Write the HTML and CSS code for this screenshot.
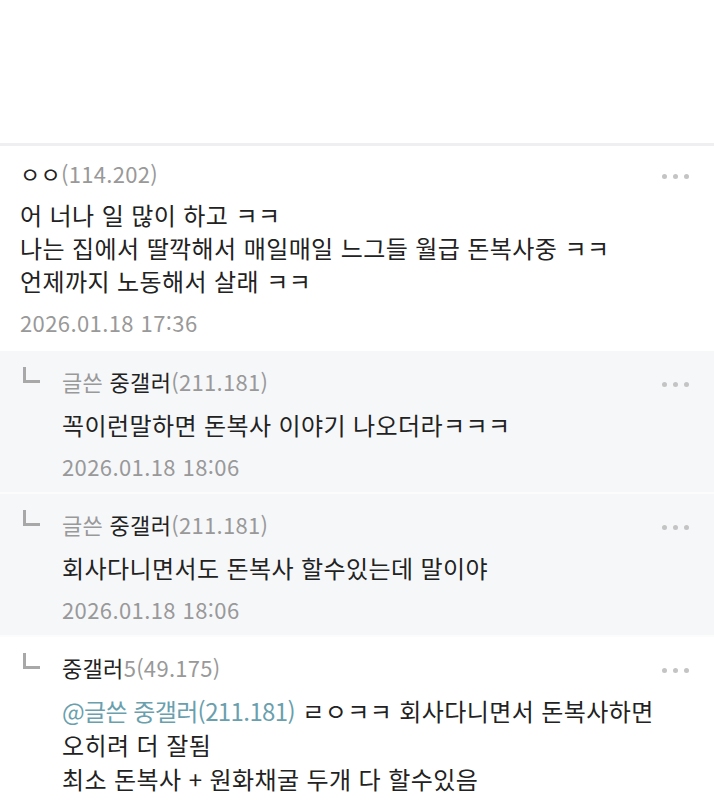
FILE: index.html
```html
<!DOCTYPE html>
<html lang="ko">
<head>
    <meta charset="UTF-8">
    <meta name="viewport" content="width=device-width, initial-scale=1.0">
    <title>댓글</title>
    <link rel="stylesheet" href="styles.css">
</head>
<body>

    <div class="top-space"></div>

    <div class="comments">
        <!-- 본 댓글 -->
        <div class="comment">
            <div class="comment-head">
                <span class="nick">ㅇㅇ<span class="ip">(114.202)</span></span>
                <span class="more"><i></i><i></i><i></i></span>
            </div>
            <div class="comment-body">
                어 너나 일 많이 하고 ㅋㅋ<br>
                나는 집에서 딸깍해서 매일매일 느그들 월급 돈복사중 ㅋㅋ<br>
                언제까지 노동해서 살래 ㅋㅋ
            </div>
            <div class="comment-date">2026.01.18 17:36</div>
        </div>

        <!-- 답글 -->
        <div class="reply">
            <span class="reply-mark"></span>
            <div class="reply-main">
                <div class="comment-head">
                    <span class="nick"><span class="writer">글쓴</span> 중갤러<span class="ip">(211.181)</span></span>
                    <span class="more"><i></i><i></i><i></i></span>
                </div>
                <div class="comment-body">꼭이런말하면 돈복사 이야기 나오더라ㅋㅋㅋ</div>
                <div class="comment-date">2026.01.18 18:06</div>
            </div>
        </div>

        <div class="reply">
            <span class="reply-mark"></span>
            <div class="reply-main">
                <div class="comment-head">
                    <span class="nick"><span class="writer">글쓴</span> 중갤러<span class="ip">(211.181)</span></span>
                    <span class="more"><i></i><i></i><i></i></span>
                </div>
                <div class="comment-body">회사다니면서도 돈복사 할수있는데 말이야</div>
                <div class="comment-date">2026.01.18 18:06</div>
            </div>
        </div>

        <div class="reply reply-last">
            <span class="reply-mark"></span>
            <div class="reply-main">
                <div class="comment-head">
                    <span class="nick">중갤러<span class="ip">5(49.175)</span></span>
                    <span class="more"><i></i><i></i><i></i></span>
                </div>
                <div class="comment-body tall">
                    <span class="mention">@글쓴 중갤러(211.181)</span> ㄹㅇㅋㅋ 회사다니면서 돈복사하면<br>
                    오히려 더 잘됨<br>
                    최소 돈복사 + 원화채굴 두개 다 할수있음
                </div>
            </div>
        </div>
    </div>

</body>
</html>
```

FILE: styles.css
```css
body {
    margin: 0;
    background-color: #fff;
    font-family: "Noto Sans CJK KR", "Noto Sans", sans-serif;
    color: #222;
}
.top-space {
    height: 143px;
}
.comments {
    border-top: 3px solid #efeff1;
}
.comment {
    padding: 12px 0 14px 20px;
}
.comment-head {
    display: flex;
    justify-content: space-between;
    align-items: center;
    height: 30px;
    font-size: 22px;
    line-height: 30px;
    letter-spacing: 0.3px;
}
.nick {
    color: #222;
}
.ip {
    color: #999;
}
.writer {
    color: #999;
}
.more {
    display: flex;
    gap: 6px;
    padding: 6px 25px 0 0;
}
.more i {
    width: 5px;
    height: 5px;
    border-radius: 50%;
    background-color: #c4c4c4;
}
.comment-body {
    margin-top: 10px;
    font-size: 24px;
    line-height: 33px;
    letter-spacing: 0.4px;
}
.comment-body.tall {
    line-height: 34px;
}
.comment-date {
    margin-top: 10px;
    font-size: 22px;
    line-height: 30px;
    letter-spacing: 0.4px;
    color: #999;
}
.reply {
    display: flex;
    height: 113px;
    padding: 15px 0 13px 23px;
    background-color: #f6f7f9;
    border-bottom: 2px solid #fcfcfd;
}
.reply-last {
    height: auto;
    padding-bottom: 20px;
    background-color: #fff;
    border-bottom: 0;
}
.reply-mark {
    flex: none;
    width: 14px;
    height: 13px;
    margin: 1px 22px 0 0;
    border-left: 3px solid #a8a8a8;
    border-bottom: 3px solid #a8a8a8;
}
.reply-main {
    flex: 1;
}
.reply .comment-body {
    margin-top: 12px;
}
.mention {
    color: #6a9fae;
    letter-spacing: -0.6px;
}
```
